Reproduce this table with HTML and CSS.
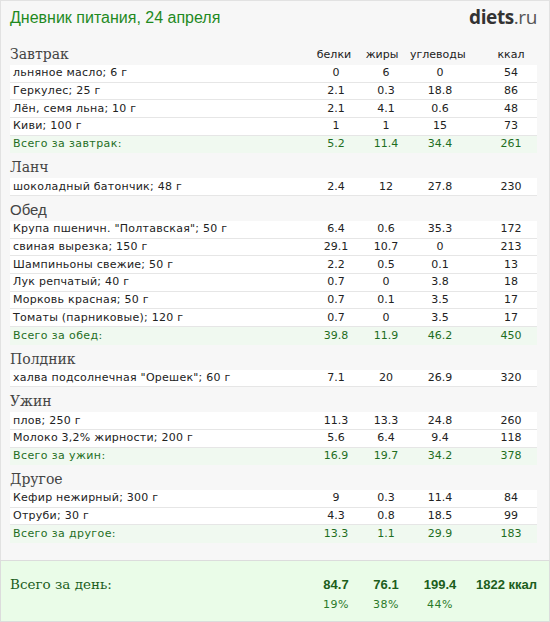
FILE: index.html
```html
<!DOCTYPE html>
<html lang="ru">
<head>
<meta charset="utf-8">
<title>Дневник питания</title>
<link rel="stylesheet" href="styles.css">
</head>
<body>
<div class="page">
  <div class="main">
    <header class="top">
      <h1 class="title">Дневник питания, 24 апреля</h1>
      <div class="logo"><b>diets</b>.ru</div>
    </header>

    <section class="meal">
      <div class="meal-head">
        <span class="meal-name">Завтрак</span>
        <span class="col c1">белки</span>
        <span class="col c2">жиры</span>
        <span class="col c3">углеводы</span>
        <span class="col c4">ккал</span>
      </div>
      <div class="row"><span class="name">льняное масло; 6 г</span><span class="v">0</span><span class="v">6</span><span class="v">0</span><span class="v k">54</span></div>
      <div class="row"><span class="name">Геркулес; 25 г</span><span class="v">2.1</span><span class="v">0.3</span><span class="v">18.8</span><span class="v k">86</span></div>
      <div class="row"><span class="name">Лён, семя льна; 10 г</span><span class="v">2.1</span><span class="v">4.1</span><span class="v">0.6</span><span class="v k">48</span></div>
      <div class="row"><span class="name">Киви; 100 г</span><span class="v">1</span><span class="v">1</span><span class="v">15</span><span class="v k">73</span></div>
      <div class="row total"><span class="name">Всего за завтрак:</span><span class="v">5.2</span><span class="v">11.4</span><span class="v">34.4</span><span class="v k">261</span></div>
    </section>

    <section class="meal">
      <div class="meal-head"><span class="meal-name">Ланч</span></div>
      <div class="row"><span class="name">шоколадный батончик; 48 г</span><span class="v">2.4</span><span class="v">12</span><span class="v">27.8</span><span class="v k">230</span></div>
    </section>

    <section class="meal">
      <div class="meal-head"><span class="meal-name sans">Обед</span></div>
      <div class="row"><span class="name">Крупа пшеничн. "Полтавская"; 50 г</span><span class="v">6.4</span><span class="v">0.6</span><span class="v">35.3</span><span class="v k">172</span></div>
      <div class="row"><span class="name">свиная вырезка; 150 г</span><span class="v">29.1</span><span class="v">10.7</span><span class="v">0</span><span class="v k">213</span></div>
      <div class="row"><span class="name">Шампиньоны свежие; 50 г</span><span class="v">2.2</span><span class="v">0.5</span><span class="v">0.1</span><span class="v k">13</span></div>
      <div class="row"><span class="name">Лук репчатый; 40 г</span><span class="v">0.7</span><span class="v">0</span><span class="v">3.8</span><span class="v k">18</span></div>
      <div class="row"><span class="name">Морковь красная; 50 г</span><span class="v">0.7</span><span class="v">0.1</span><span class="v">3.5</span><span class="v k">17</span></div>
      <div class="row"><span class="name">Томаты (парниковые); 120 г</span><span class="v">0.7</span><span class="v">0</span><span class="v">3.5</span><span class="v k">17</span></div>
      <div class="row total"><span class="name">Всего за обед:</span><span class="v">39.8</span><span class="v">11.9</span><span class="v">46.2</span><span class="v k">450</span></div>
    </section>

    <section class="meal">
      <div class="meal-head"><span class="meal-name">Полдник</span></div>
      <div class="row"><span class="name">халва подсолнечная "Орешек"; 60 г</span><span class="v">7.1</span><span class="v">20</span><span class="v">26.9</span><span class="v k">320</span></div>
    </section>

    <section class="meal">
      <div class="meal-head"><span class="meal-name">Ужин</span></div>
      <div class="row"><span class="name">плов; 250 г</span><span class="v">11.3</span><span class="v">13.3</span><span class="v">24.8</span><span class="v k">260</span></div>
      <div class="row"><span class="name">Молоко 3,2% жирности; 200 г</span><span class="v">5.6</span><span class="v">6.4</span><span class="v">9.4</span><span class="v k">118</span></div>
      <div class="row total"><span class="name">Всего за ужин:</span><span class="v">16.9</span><span class="v">19.7</span><span class="v">34.2</span><span class="v k">378</span></div>
    </section>

    <section class="meal">
      <div class="meal-head"><span class="meal-name">Другое</span></div>
      <div class="row"><span class="name">Кефир нежирный; 300 г</span><span class="v">9</span><span class="v">0.3</span><span class="v">11.4</span><span class="v k">84</span></div>
      <div class="row"><span class="name">Отруби; 30 г</span><span class="v">4.3</span><span class="v">0.8</span><span class="v">18.5</span><span class="v k">99</span></div>
      <div class="row total"><span class="name">Всего за другое:</span><span class="v">13.3</span><span class="v">1.1</span><span class="v">29.9</span><span class="v k">183</span></div>
    </section>
  </div>

  <div class="day">
    <div class="day-row">
      <span class="day-name">Всего за день:</span>
      <span class="dv">84.7</span>
      <span class="dv">76.1</span>
      <span class="dv">199.4</span>
      <span class="dv kcal">1822 ккал</span>
    </div>
    <div class="pct-row">
      <span></span>
      <span class="pct">19%</span>
      <span class="pct">38%</span>
      <span class="pct">44%</span>
      <span></span>
    </div>
  </div>
</div>
</body>
</html>
```

FILE: styles.css
```css
* { box-sizing: border-box; }

html, body {
  margin: 0;
  padding: 0;
  background: #ffffff;
}

.page {
  width: 550px;
  height: 622px;
  display: flex;
  flex-direction: column;
  font-family: "DejaVu Sans", Verdana, sans-serif;
  font-size: 11px;
  color: #222;
}

.main {
  background: #f7f7f7;
  border: 1px solid #e2e2e2;
  border-bottom: none;
  padding: 0 12px 17px 9px;
}

.top {
  height: 39px;
  display: flex;
  justify-content: space-between;
  align-items: flex-start;
}

.title {
  margin: 7px 0 0 0;
  font-family: "Liberation Sans", Arial, sans-serif;
  font-weight: normal;
  font-size: 16px;
  line-height: 20px;
  color: #1f8a1f;
}

.logo {
  margin-top: 4px;
  font-family: "Open Sans", "Liberation Sans", sans-serif;
  font-size: 19px;
  line-height: 24px;
  color: #555;
  letter-spacing: -0.4px;
}

.logo b {
  font-weight: 700;
  color: #333;
}

.meal-head,
.row,
.day-row,
.pct-row {
  display: grid;
  grid-template-columns: 1fr 52px 48px 60px 67px;
  align-items: center;
}

.meal-head {
  height: 25px;
  align-items: end;
  padding-bottom: 3px;
}

.meal-name {
  font-family: "DejaVu Serif", Georgia, serif;
  font-size: 14px;
  line-height: 16px;
  color: #444;
}

.meal-name.sans {
  font-family: "Liberation Sans", Arial, sans-serif;
  font-size: 15px;
  color: #444;
}

.col {
  text-align: center;
  line-height: 14px;
  color: #222;
}

.col.c1 { padding-right: 4px; }
.col.c2 { padding-right: 8px; }
.col.c3 { padding-right: 7px; }
.col.c4 { padding-left: 15px; }

.row {
  height: 17.67px;
  background: #ffffff;
  border-bottom: 1px solid #e6e6e6;
  line-height: 14px;
}

.row .name {
  padding-left: 3px;
  white-space: nowrap;
  letter-spacing: 0.25px;
}

.v {
  text-align: center;
}

.v.k {
  padding-left: 15px;
}

.row.total {
  background: #f0f9f0;
  border-bottom: none;
  color: #1f6e1f;
}

.row.total .name {
  letter-spacing: 0.4px;
}

.day {
  flex: 1;
  background: #eafce8;
  border: 1px solid #dcdcdc;
  padding: 0 12px 0 9px;
}

.day-row {
  margin-top: 13px;
  height: 20px;
}

.day-name {
  font-family: "DejaVu Serif", Georgia, serif;
  font-size: 13.5px;
  color: #1c5e1c;
}

.dv {
  text-align: center;
  font-family: "Liberation Sans", Arial, sans-serif;
  font-weight: bold;
  font-size: 13px;
  color: #1c5e1c;
}

.dv.kcal {
  text-align: right;
  white-space: nowrap;
}

.pct-row {
  height: 20px;
}

.pct {
  text-align: center;
  color: #2a7a2a;
  letter-spacing: 0.5px;
}
```
